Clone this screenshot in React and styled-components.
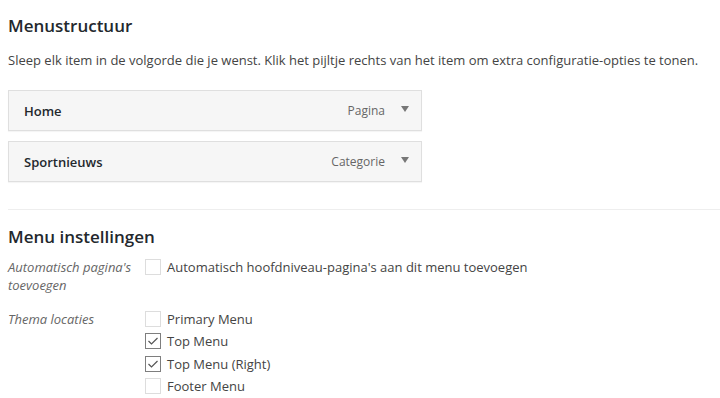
import React from 'react'
import styled, { createGlobalStyle } from 'styled-components'

const GlobalStyle = createGlobalStyle`
  body {
    margin: 0;
    background: #fff;
    font-family: 'Open Sans', 'Liberation Sans', sans-serif;
    font-size: 13px;
    color: #444;
  }
`

const Page = styled.div`
  padding: 0 0 0 8px;
  overflow: hidden;
`

const Heading = styled.h3`
  margin: 0;
  padding-top: 14px;
  font-size: 17px;
  font-weight: 600;
  line-height: 24px;
  color: #23282d;
`

const Intro = styled.p`
  margin: 12px 0 0;
  line-height: 20px;
  white-space: nowrap;
`

const ItemList = styled.ul`
  list-style: none;
  margin: 20px 0 0;
  padding: 0;
  width: 414px;
  display: flex;
  flex-direction: column;
  gap: 10px;
`

const Item = styled.li`
  display: flex;
  align-items: center;
  height: 41px;
  box-sizing: border-box;
  padding: 0 12px 0 15px;
  border: 1px solid #dfdfdf;
  background: #f6f6f6;
  box-shadow: 0 1px 1px rgba(0, 0, 0, 0.04);
`

const ItemTitle = styled.span`
  flex: 1;
  font-weight: 600;
  color: #23282d;
`

const ItemType = styled.span`
  font-size: 12px;
  color: #666;
  margin-right: 16px;
`

const Arrow = styled.span`
  width: 0;
  height: 0;
  border-left: 4px solid transparent;
  border-right: 4px solid transparent;
  border-top: 6px solid #777;
  margin-top: -3px;
`

const Divider = styled.hr`
  margin: 27px -8px 0 0;
  border: 0;
  border-top: 1px solid #eee;
`

const SettingsHeading = styled(Heading)`
  padding-top: 15px;
`

const Settings = styled.dl`
  display: grid;
  grid-template-columns: 137px 1fr;
  row-gap: 16px;
  margin: 9px 0 0;
`

const Label = styled.dt`
  font-style: italic;
  color: #666;
  line-height: 18px;
  width: 128px;
`

const Field = styled.dd`
  margin: 0;
  display: flex;
  flex-direction: column;
  gap: 4.4px;
`

const Option = styled.label`
  display: flex;
  align-items: center;
  gap: 6px;
  line-height: 18px;
  color: #444;
`

const Box = styled.span`
  width: 16px;
  height: 16px;
  box-sizing: border-box;
  border: 1px solid ${(p) => (p.checked ? '#7e7e7e' : '#ddd')};
  background: #fff;
  display: flex;
  align-items: center;
  justify-content: center;
`

const Check = () => (
  <svg width="12" height="10" viewBox="0 0 12 10">
    <path d="M1.5 5 L4.5 8 L10.5 2" fill="none" stroke="#555" strokeWidth="1.2" />
  </svg>
)

const Checkbox = ({ checked, children }) => (
  <Option>
    <Box checked={checked}>{checked && <Check />}</Box>
    {children}
  </Option>
)

const items = [
  { title: 'Home', type: 'Pagina' },
  { title: 'Sportnieuws', type: 'Categorie' },
]

const locations = [
  { name: 'Primary Menu', checked: false },
  { name: 'Top Menu', checked: true },
  { name: 'Top Menu (Right)', checked: true },
  { name: 'Footer Menu', checked: false },
]

export default function App() {
  return (
    <Page>
      <GlobalStyle />
      <Heading>Menustructuur</Heading>
      <Intro>Sleep elk item in de volgorde die je wenst. Klik het pijltje rechts van het item om extra configuratie-opties te tonen.</Intro>
      <ItemList>
        {items.map((item) => (
          <Item key={item.title}>
            <ItemTitle>{item.title}</ItemTitle>
            <ItemType>{item.type}</ItemType>
            <Arrow />
          </Item>
        ))}
      </ItemList>
      <Divider />
      <SettingsHeading>Menu instellingen</SettingsHeading>
      <Settings>
        <Label>Automatisch pagina's toevoegen</Label>
        <Field>
          <Checkbox checked={false}>Automatisch hoofdniveau-pagina's aan dit menu toevoegen</Checkbox>
        </Field>
        <Label>Thema locaties</Label>
        <Field>
          {locations.map((loc) => (
            <Checkbox key={loc.name} checked={loc.checked}>{loc.name}</Checkbox>
          ))}
        </Field>
      </Settings>
    </Page>
  )
}
